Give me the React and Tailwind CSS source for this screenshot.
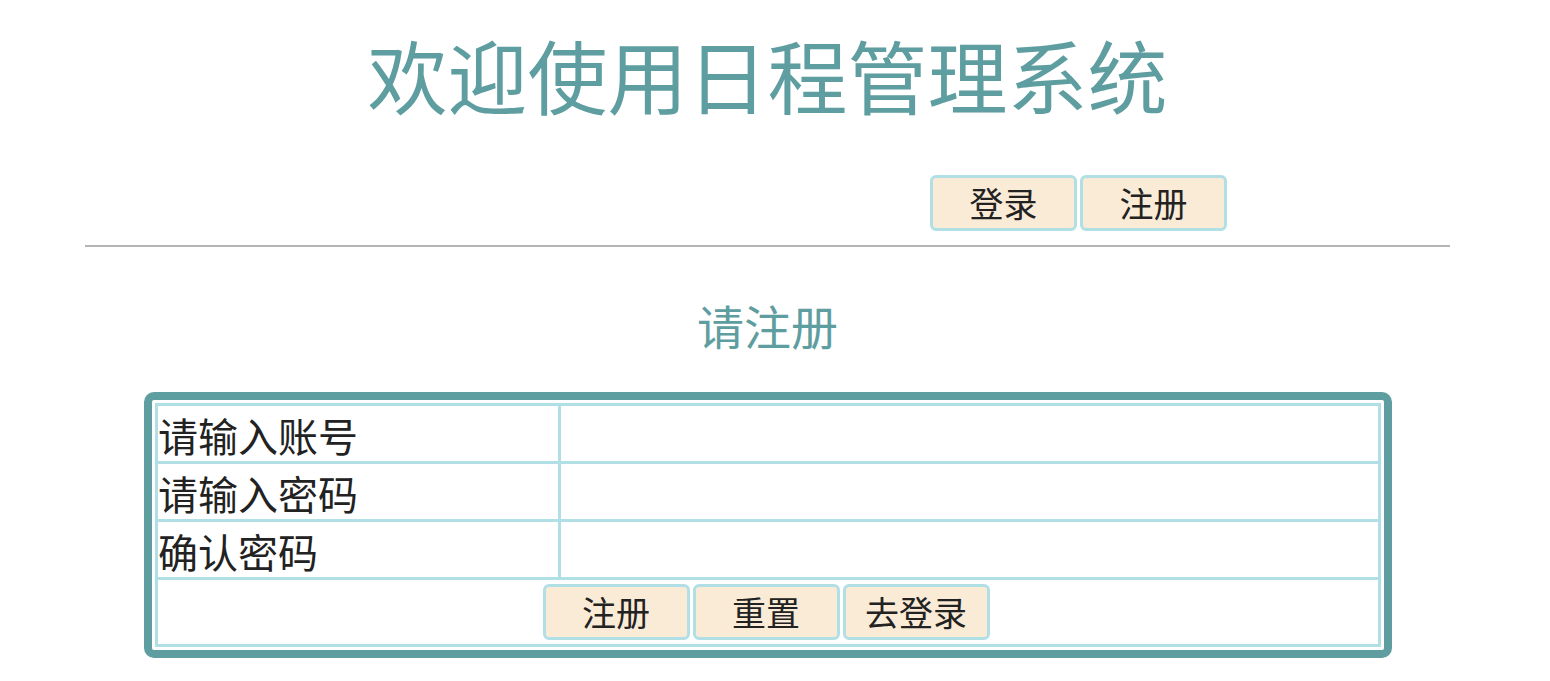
const font = { fontFamily: '"Noto Sans CJK SC", "Noto Sans", sans-serif' };

const Btn = ({ children }) => (
  <button className="w-[147px] h-[56px] bg-[#faebd7] border-[3px] border-[#b0e0e6] rounded-[6px] text-[34px] leading-none text-[#222]">
    {children}
  </button>
);

export default function App() {
  const rows = ['请输入账号', '请输入密码', '确认密码'];
  return (
    <div className="w-[1550px] h-[681px] bg-white overflow-hidden" style={font}>
      <div className="ml-[85px] w-[1365px]">
        <h1 className="pt-[33px] text-center text-[80px] leading-[80px] text-[#5f9ea0] font-normal">
          欢迎使用日程管理系统
        </h1>

        <div className="mt-[62px] ml-[845px] flex gap-[3px]">
          <Btn>登录</Btn>
          <Btn>注册</Btn>
        </div>

        <hr className="mt-[14px] border-0 h-[2px] bg-[#b4b4b4]" />

        <h2 className="mt-[52px] text-center text-[47px] leading-[52px] text-[#5f9ea0]">请注册</h2>

        <div className="mt-[41px] ml-[59px] w-[1248px] border-[8px] border-[#5f9ea0] rounded-[10px] p-[3px] bg-white">
          <table className="w-full border-collapse">
            <tbody>
              {rows.map((r) => (
                <tr key={r} className="h-[58px]">
                  <td className="w-[403px] border-[3px] border-[#b0e0e6] text-[40px] leading-[46px] text-[#222] align-middle pt-[2px] pl-0">
                    {r}
                  </td>
                  <td className="border-[3px] border-[#b0e0e6]"></td>
                </tr>
              ))}
              <tr>
                <td colSpan={2} className="border-[3px] border-[#b0e0e6] text-center h-[67px]">
                  <div className="flex justify-center gap-[3px] pr-[4px]">
                    <Btn>注册</Btn>
                    <Btn>重置</Btn>
                    <Btn>去登录</Btn>
                  </div>
                </td>
              </tr>
            </tbody>
          </table>
        </div>
      </div>
    </div>
  );
}
